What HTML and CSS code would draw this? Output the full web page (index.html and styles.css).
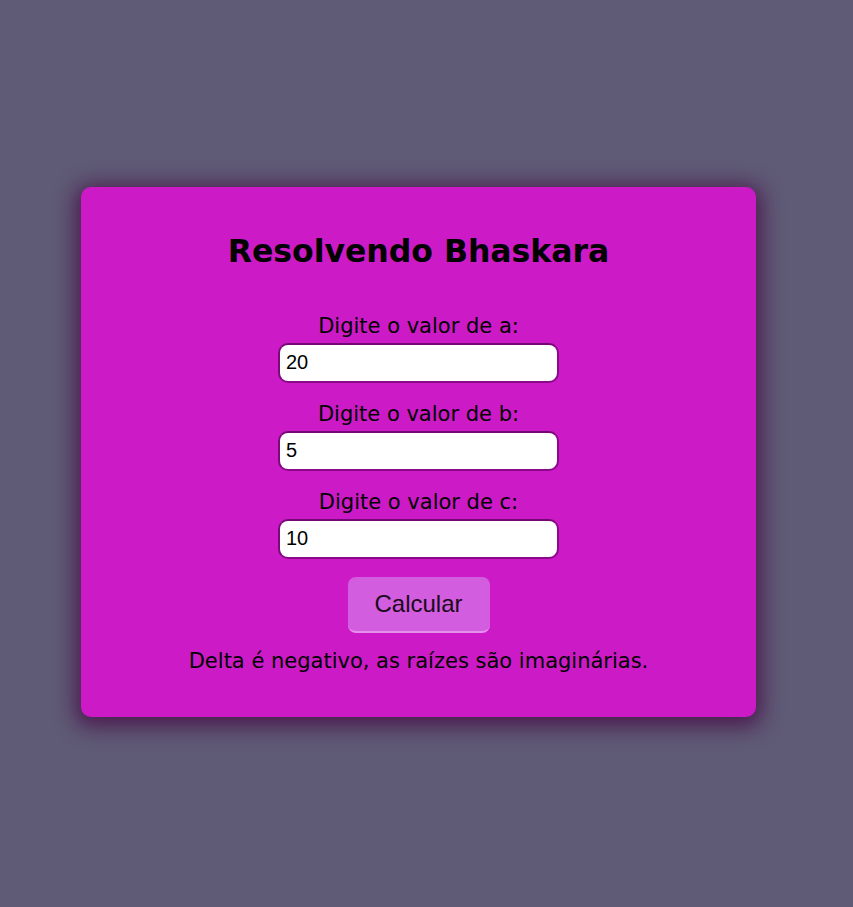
FILE: index.html
```html
<!DOCTYPE html>
<html lang="pt-BR">
<head>
<meta charset="utf-8">
<title>Resolvendo Bhaskara</title>
<link rel="stylesheet" href="styles.css">
</head>
<body>
<main class="card">
  <h1 class="title">Resolvendo Bhaskara</h1>
  <form class="form">
    <label class="label" for="a">Digite o valor de a:</label>
    <input class="field" id="a" type="text" value="20">
    <label class="label" for="b">Digite o valor de b:</label>
    <input class="field" id="b" type="text" value="5">
    <label class="label" for="c">Digite o valor de c:</label>
    <input class="field" id="c" type="text" value="10">
    <button class="btn" type="button">Calcular</button>
  </form>
  <p class="result">Delta é negativo, as raízes são imaginárias.</p>
</main>
</body>
</html>
```
FILE: styles.css
```css
html, body {
  margin: 0;
  padding: 0;
}
body {
  background: #5f5a75;
  min-height: 100vh;
  box-sizing: border-box;
  display: flex;
  align-items: center;
  justify-content: center;
  padding-right: 16px;
  padding-bottom: 4px;
  font-family: "DejaVu Sans", sans-serif;
  color: #000;
}
.card {
  width: 675px;
  height: 530px;
  box-sizing: border-box;
  background: #cc1ac6;
  border-radius: 10px;
  box-shadow: 0 4px 20px 6px rgba(70, 10, 70, 0.75);
  display: flex;
  flex-direction: column;
  align-items: center;
  padding-top: 40px;
}
.title {
  margin: 0;
  font-size: 31.5px;
  line-height: 48px;
  font-weight: 700;
}
.form {
  display: flex;
  flex-direction: column;
  align-items: center;
  margin-top: 38px;
}
.label {
  font-size: 21px;
  line-height: 26px;
  margin-bottom: 4px;
}
.field {
  width: 281px;
  height: 40px;
  box-sizing: border-box;
  border: 2px solid #8a0a8a;
  border-top-color: #760676;
  border-left-color: #7c087c;
  border-radius: 10px;
  background: #fff;
  font-family: "Liberation Sans", Arial, sans-serif;
  font-size: 20px;
  padding: 0 6px;
  color: #000;
  margin-bottom: 18px;
}
.btn {
  margin-top: 0;
  width: 142px;
  height: 56px;
  border: none;
  border-bottom: 2px solid #e590ea;
  border-radius: 8px;
  background: #d35ddf;
  font-family: "Liberation Sans", Arial, sans-serif;
  font-size: 24px;
  color: #1a0a1a;
}
.result {
  margin: 14px 0 0;
  font-size: 21px;
  line-height: 28px;
}
```
